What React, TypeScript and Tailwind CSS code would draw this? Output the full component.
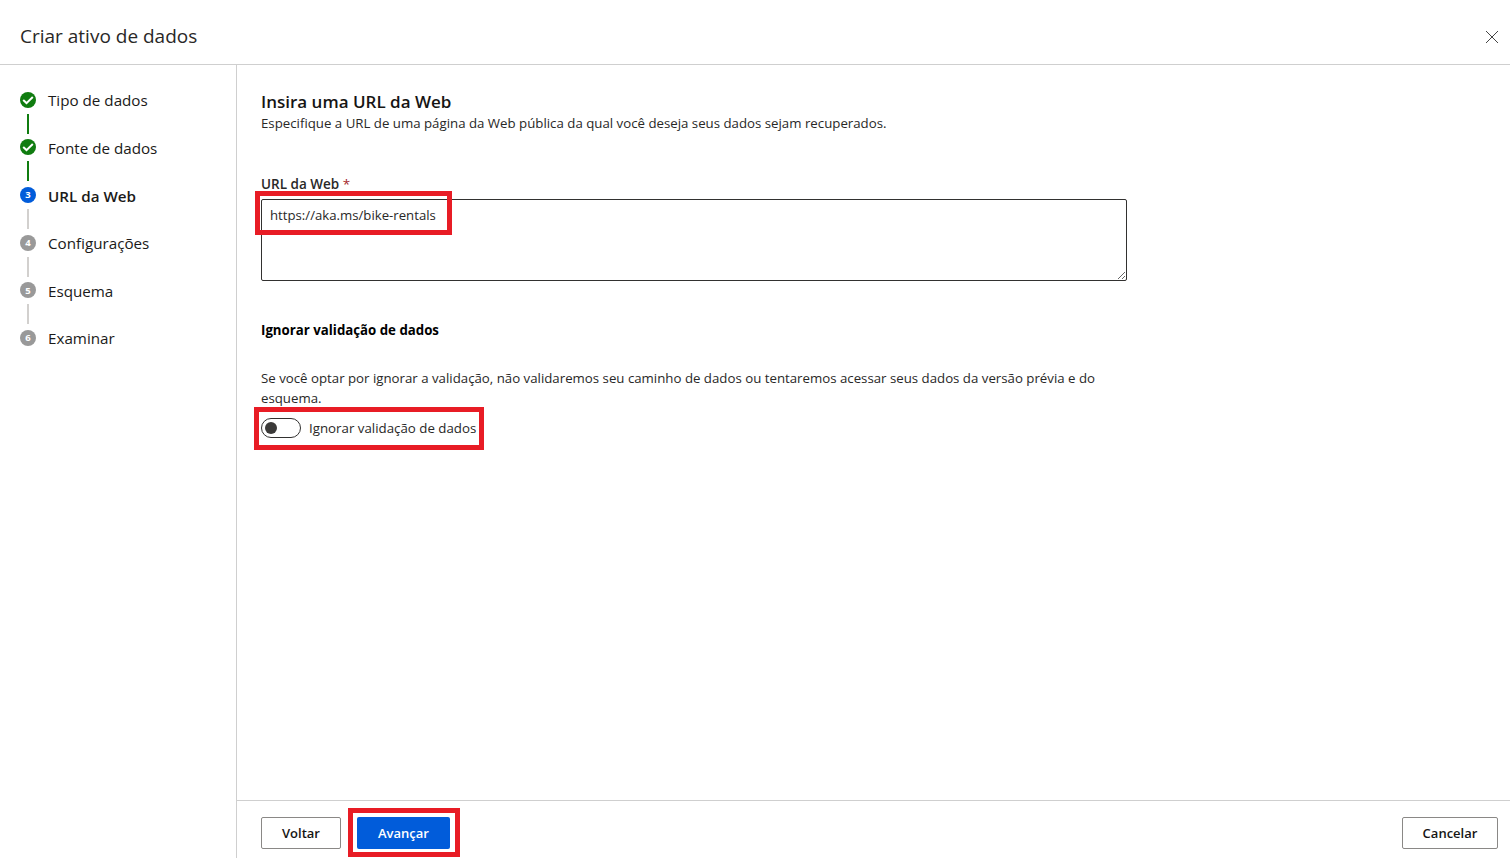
type StepState = "done" | "current" | "pending";

const steps: { label: string; state: StepState }[] = [
  { label: "Tipo de dados", state: "done" },
  { label: "Fonte de dados", state: "done" },
  { label: "URL da Web", state: "current" },
  { label: "Configurações", state: "pending" },
  { label: "Esquema", state: "pending" },
  { label: "Examinar", state: "pending" },
];

const badgeColor: Record<StepState, string> = {
  done: "bg-[#107c10]",
  current: "bg-[#015cda]",
  pending: "bg-[#999999]",
};

function Highlight({ className }: { className: string }) {
  return <div className={"pointer-events-none absolute border-[5px] border-[#e81c25] " + className} />;
}

function Step({ label, state, index, last }: { label: string; state: StepState; index: number; last: boolean }) {
  return (
    <li className="flex h-[47.6px] gap-3">
      <div className="flex w-4 flex-col items-center gap-[6px]">
        <div
          className={
            "flex size-4 shrink-0 items-center justify-center rounded-full pt-px text-[9.5px] leading-4 font-bold text-white " +
            badgeColor[state]
          }
        >
          {state === "done" ? (
            <svg viewBox="0 0 16 16" className="-mt-px size-4" fill="none" stroke="white" strokeWidth="2">
              <path d="M3.2 8.1 6.5 11.1 12.8 5" />
            </svg>
          ) : (
            index + 1
          )}
        </div>
        {!last && <div className={"h-5 w-0.5 " + (state === "done" ? "bg-[#107c10]" : "bg-[#d2d0ce]")} />}
      </div>
      <span
        className={
          "mt-[0.6px] text-[15.2px] leading-[17px] whitespace-nowrap text-[#1b1a19] " +
          (state === "current" ? "font-semibold" : "")
        }
      >
        {label}
      </span>
    </li>
  );
}

export default function App() {
  return (
    <div className="relative flex h-[858px] w-[1510px] flex-col overflow-hidden bg-white font-['Open_Sans','Noto_Sans',sans-serif] text-[13.25px] text-[#292827]">
      <header className="flex h-[65px] shrink-0 items-center justify-between border-b border-[#cfcfcf] pt-2 pr-3 pl-5">
        <h1 className="text-[19px] leading-7">Criar ativo de dados</h1>
        <button aria-label="Fechar" className="mt-0.5">
          <svg viewBox="0 0 12 12" className="size-3" fill="none" stroke="#444444" strokeWidth="1">
            <path d="M0 0 12 12M12 0 0 12" />
          </svg>
        </button>
      </header>
      <div className="flex min-h-0 grow">
        <aside className="w-[237px] shrink-0 border-r border-[#cfcfcf] pt-[26.8px] pl-5">
          <ol>
            {steps.map((s, i) => (
              <Step key={s.label} label={s.label} state={s.state} index={i} last={i === steps.length - 1} />
            ))}
          </ol>
        </aside>
        <div className="flex min-w-0 grow flex-col">
          <main className="grow pt-[25px] pl-6">
            <h2 className="text-[17px] leading-6 font-semibold text-[#161514]">Insira uma URL da Web</h2>
            <p className="-mt-px leading-5">
              Especifique a URL de uma página da Web pública da qual você deseja seus dados sejam recuperados.
            </p>
            <label htmlFor="url" className="mt-[41px] block text-[13.5px] leading-5 font-semibold">
              URL da Web <span className="font-normal text-[#a4262c]">*</span>
            </label>
            <textarea
              id="url"
              defaultValue="https://aka.ms/bike-rentals"
              className="mt-[5px] block h-[82px] w-[866px] resize rounded-xs border border-[#323130] px-2 py-[5px] text-[13.2px] leading-5"
            />
            <h3 className="mt-[39px] leading-5 font-bold text-black">Ignorar validação de dados</h3>
            <p className="mt-7 w-[840px] leading-5">
              Se você optar por ignorar a validação, não validaremos seu caminho de dados ou tentaremos acessar seus
              dados da versão prévia e do esquema.
            </p>
            <div className="mt-[10px] flex items-center gap-2">
              <button
                role="switch"
                aria-checked="false"
                aria-label="Ignorar validação de dados"
                className="flex h-5 w-10 items-center rounded-full border border-[#323130] pl-[3px]"
              >
                <span className="size-3 rounded-full bg-[#3b3a39]" />
              </button>
              <span className="text-[13.3px] leading-5">Ignorar validação de dados</span>
            </div>
          </main>
          <footer className="flex h-[58px] shrink-0 items-start border-t border-[#cfcfcf] pt-4 pr-3 pl-6 text-[13px] font-semibold text-[#161514]">
            <button className="h-8 w-20 rounded-xs border border-[#8a8886] pt-0.5">Voltar</button>
            <button className="ml-4 h-8 w-[93px] rounded-xs bg-[#015cda] pt-0.5 text-white">Avançar</button>
            <button className="ml-auto h-8 w-24 rounded-xs border border-[#8a8886] pt-0.5">Cancelar</button>
          </footer>
        </div>
      </div>
      <Highlight className="top-[191px] left-[255px] h-11 w-[197px]" />
      <Highlight className="top-[407px] left-[254px] h-[43px] w-[230px]" />
      <Highlight className="top-[808px] left-[348px] h-[49px] w-28" />
    </div>
  );
}
